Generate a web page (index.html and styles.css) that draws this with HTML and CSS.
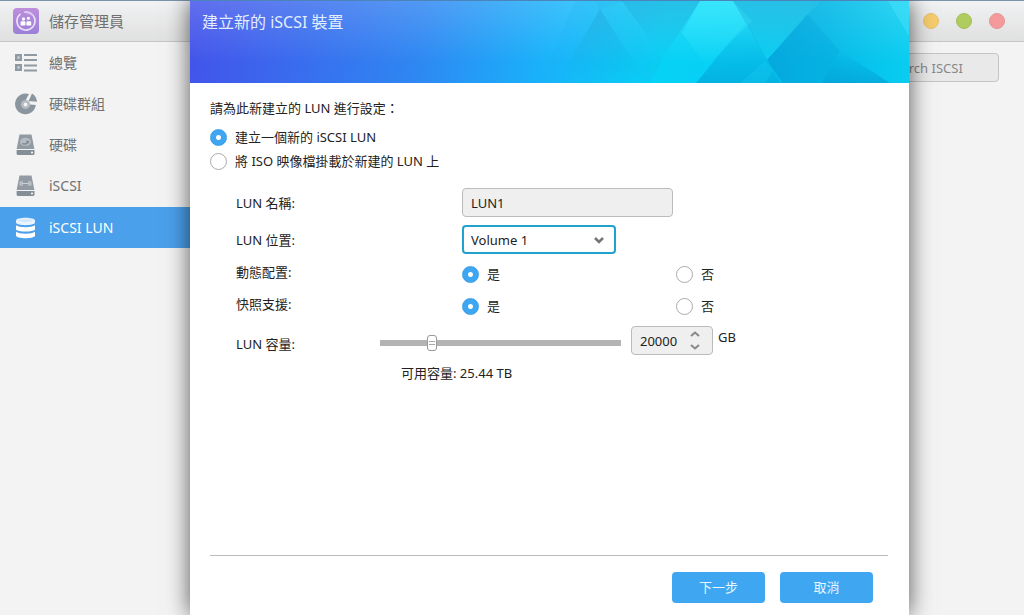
FILE: index.html
```
<!DOCTYPE html>
<html lang="zh-Hant">
<head>
    <meta charset="UTF-8">
    <meta name="viewport" content="width=device-width, initial-scale=1.0">
    <title>儲存管理員</title>
    <link rel="stylesheet" href="styles.css">
</head>
<body>
    <div class="app">
        <header class="titlebar">
            <svg class="app-icon" viewBox="0 0 26 26">
                <defs>
                    <linearGradient id="appBg" x1="0" y1="0" x2="0" y2="1">
                        <stop offset="0" stop-color="#bd8fdc"/>
                        <stop offset="1" stop-color="#9a7fd8"/>
                    </linearGradient>
                </defs>
                <rect width="26" height="26" rx="4" fill="url(#appBg)"/>
                <path d="M7 6.300 A9 9 0 1 0 12 4.100" fill="none" stroke="#ecdff8" stroke-width="1.700" stroke-linecap="round"/>
                <path d="M12 4.100 A9 9 0 0 1 20 7.500" fill="none" stroke="#d9c4ee" stroke-width="1.400"/>
                <rect x="7.600" y="13.200" width="4.800" height="4.400" rx="1.200" fill="#fff"/>
                <rect x="13.400" y="13.200" width="4.800" height="4.400" rx="1.200" fill="#fff"/>
                <rect x="9" y="9.600" width="3" height="2.800" rx="1" fill="#fff"/>
                <circle cx="15.400" cy="10.200" r="1.500" fill="#fff"/>
            </svg>
            <h1>儲存管理員</h1>
            <div class="window-buttons">
                <button class="dot yellow" aria-label="最小化"></button>
                <button class="dot green" aria-label="最大化"></button>
                <button class="dot red" aria-label="關閉"></button>
            </div>
        </header>

        <div class="workspace">
            <nav class="sidebar">
                <a href="#overview">
                    <svg viewBox="0 0 24 24">
                        <g fill="#d5d9dc" stroke="#909aa3" stroke-width="2.400">
                            <rect x="2.200" y="4.200" width="4.600" height="4.600"/>
                            <rect x="2.200" y="14.200" width="4.600" height="4.600"/>
                        </g>
                        <path d="M10 4h13M10 9h13M10 14.500h13M10 19.500h13" stroke="#909aa3" stroke-width="2"/>
                    </svg>
                    總覽
                </a>
                <a href="#groups">
                    <svg viewBox="0 0 24 24">
                        <path d="M15 2.100 A10.400 10.400 0 1 0 21.800 13 L16 12.500 A4.400 4.400 0 0 1 12 7.600 Z" fill="#8b959e"/>
                        <circle cx="11.500" cy="12.500" r="4.600" fill="#b3bac0"/>
                        <circle cx="11.500" cy="12.500" r="1.900" fill="#f3f3f3"/>
                        <path d="M18 1.600 A10.400 10.400 0 0 1 23 9.800 L14.600 9 Z" fill="#8b959e"/>
                    </svg>
                    硬碟群組
                </a>
                <a href="#disks">
                    <svg viewBox="0 0 24 24">
                        <path d="M5.500 1.500h12l2.900 14.500H2.600z" fill="#929ba4"/>
                        <path d="M2.600 17h17.900v3.500q0 1.500-1.500 1.500H4.100q-1.500 0-1.500-1.500z" fill="#848e97"/>
                        <ellipse cx="11.500" cy="8.800" rx="5.600" ry="4" fill="#b4bbc1"/>
                        <path d="M8.500 10.300q3 1.800 6-1.300l-2-1" fill="none" stroke="#7f8992" stroke-width="1.500"/>
                        <circle cx="18" cy="19.600" r="1" fill="#fff"/>
                    </svg>
                    硬碟
                </a>
                <a href="#iscsi">
                    <svg viewBox="0 0 24 24">
                        <path d="M5.500 1.500h12l2.900 14.500H2.600z" fill="#929ba4"/>
                        <path d="M2.600 17h17.900v3.500q0 1.500-1.500 1.500H4.100q-1.500 0-1.500-1.500z" fill="#848e97"/>
                        <path d="M6.200 7.500v4M8 7v5M8 9.500h7M15 7v5M16.800 7.500v4" fill="none" stroke="#c9ced2" stroke-width="1.200"/>
                        <circle cx="18" cy="19.600" r="1" fill="#fff"/>
                    </svg>
                    iSCSI
                </a>
                <a href="#lun" class="active">
                    <svg viewBox="0 0 24 24">
                        <path d="M2 4.500C2 .8 21 .8 21 4.500v2C21 10 2 10 2 6.500z" fill="#e9f4fe"/>
                        <path d="M2 9.200c3 2.600 16 2.600 19 0v4.300c-2 2.800-17 2.800-19 0z" fill="#fff"/>
                        <path d="M2 15.800c3 2.600 16 2.600 19 0v4.200c-2 3-17 3-19 0z" fill="#fff"/>
                        <ellipse cx="11.500" cy="4.500" rx="7.500" ry="1.500" fill="#d3e8fb"/>
                    </svg>
                    iSCSI LUN
                </a>
            </nav>
            <main class="content">
                <input class="search" type="search" placeholder="Search ISCSI" aria-label="Search ISCSI">
            </main>
        </div>
    </div>

    <section class="wizard" role="dialog" aria-labelledby="wizardTitle">
        <div class="wizard-header">
            <svg class="wizard-art" viewBox="0 0 719 82" preserveAspectRatio="none">
                <defs>
                    <linearGradient id="deep" x1="0" y1="0" x2="1" y2="0">
                        <stop offset="0" stop-color="#0496d4" stop-opacity=".6"/>
                        <stop offset=".45" stop-color="#0496d4" stop-opacity=".35"/>
                        <stop offset="1" stop-color="#0496d4" stop-opacity="0"/>
                    </linearGradient>
                    <linearGradient id="fall" x1="0" y1="0" x2="0" y2="1">
                        <stop offset="0" stop-color="#1a9bd0" stop-opacity=".4"/>
                        <stop offset="1" stop-color="#1a9bd0" stop-opacity=".05"/>
                    </linearGradient>
                    <linearGradient id="rise" x1="0" y1="0" x2="0" y2="1">
                        <stop offset="0" stop-color="#0294d0" stop-opacity="0"/>
                        <stop offset="1" stop-color="#0294d0" stop-opacity=".5"/>
                    </linearGradient>
                    <linearGradient id="glow" x1="0" y1="0" x2="0" y2="1">
                        <stop offset="0" stop-color="#3deeff" stop-opacity=".6"/>
                        <stop offset="1" stop-color="#3deeff" stop-opacity="0"/>
                    </linearGradient>
                </defs>
                <polygon points="385,0 436,0 410,8 367,82 350,82" fill="#1fa8f0" opacity=".15"/>
                <polygon points="410,8 367,82 457,82" fill="url(#fall)"/>
                <polygon points="432,0 473,57 510,0" fill="url(#fall)"/>
                <polygon points="410,8 405,0 432,0 473,57 460,82 457,82" fill="#20b4e4" opacity=".2"/>
                <polygon points="510,0 543,0 562,20 516,65 492,32" fill="url(#glow)"/>
                <polygon points="543,0 630,0 577,59" fill="url(#fall)"/>
                <polygon points="557,20 506,82 591,82 577,59" fill="url(#rise)"/>
                <polygon points="575,60 583,70 575,82 550,82" fill="#14c8f0" opacity=".4"/>
                <polygon points="630,0 577,59 592,82 719,82 719,0" fill="url(#deep)"/>
                <polygon points="617,13 577,59 592,82 632,82 650,50" fill="#0294d0" opacity=".2"/>
                <polygon points="650,50 632,82 700,82" fill="url(#rise)"/>
                <polygon points="698,0 719,0 719,35" fill="#54e8ff" opacity=".35"/>
            </svg>
            <h2 id="wizardTitle">建立新的 iSCSI 裝置</h2>
        </div>

        <form class="wizard-body">
            <p class="intro">請為此新建立的 LUN 進行設定：</p>
            <label class="choice"><input type="radio" name="mode" checked> 建立一個新的 iSCSI LUN</label>
            <label class="choice"><input type="radio" name="mode"> 將 ISO 映像檔掛載於新建的 LUN 上</label>

            <div class="fields">
                <label for="lunName">LUN 名稱:</label>
                <input class="text" type="text" id="lunName" value="LUN1">

                <label for="lunVolume">LUN 位置:</label>
                <div class="select-box">
                    <select id="lunVolume">
                        <option>Volume 1</option>
                    </select>
                    <svg viewBox="0 0 12 8"><path d="M2 2l4 4 4-4" fill="none" stroke="#777" stroke-width="2.600"/></svg>
                </div>

                <span class="pair-label" id="thinLabel">動態配置:</span>
                <div class="pair" role="radiogroup" aria-labelledby="thinLabel">
                    <label class="choice"><input type="radio" name="thin" checked> 是</label>
                    <label class="choice"><input type="radio" name="thin"> 否</label>
                </div>

                <span class="pair-label" id="snapLabel">快照支援:</span>
                <div class="pair" role="radiogroup" aria-labelledby="snapLabel">
                    <label class="choice"><input type="radio" name="snapshot" checked> 是</label>
                    <label class="choice"><input type="radio" name="snapshot"> 否</label>
                </div>
            </div>

            <div class="capacity">
                <label for="lunSize">LUN 容量:</label>
                <input class="slider" type="range" id="lunSize" min="0" max="98300" value="20000">
                <div class="spinner">
                    <input type="text" inputmode="numeric" value="20000" aria-label="LUN 容量 (GB)">
                    <div class="steps">
                        <button type="button" aria-label="增加"><svg viewBox="0 0 10 6"><path d="M1 5l4-3.500 4 3.500" fill="none" stroke="#888" stroke-width="2"/></svg></button>
                        <button type="button" aria-label="減少"><svg viewBox="0 0 10 6"><path d="M1 1l4 3.500 4-3.500" fill="none" stroke="#888" stroke-width="2"/></svg></button>
                    </div>
                </div>
                <span class="unit">GB</span>
            </div>
            <p class="available">可用容量: 25.44 TB</p>

            <div class="actions">
                <button type="button">下一步</button>
                <button type="button">取消</button>
            </div>
        </form>
    </section>
</body>
</html>
```

FILE: styles.css
```
* {
    box-sizing: border-box;
}
body {
    margin: 0;
    min-height: 100vh;
    position: relative;
    overflow: hidden;
    display: flex;
    background-color: #f3f3f3;
    font-family: "Noto Sans", "Noto Sans CJK TC", sans-serif;
    font-size: 13px;
    line-height: 20px;
    color: #222;
}
button, input, select {
    font: inherit;
    color: inherit;
}
h1, h2, p {
    margin: 0;
    font-weight: normal;
}

/* main window */
.app {
    flex: 1;
    display: flex;
    flex-direction: column;
    border-top: 1px solid #7c93ad;
}
.titlebar {
    display: flex;
    align-items: center;
    height: 41px;
    padding: 0 19px 0 13px;
    background: linear-gradient(#f0f2f3, #e0e0e0);
    border-bottom: 1px solid #c6c6c6;
}
.app-icon {
    width: 26px;
    height: 26px;
    margin-right: 10px;
}
.titlebar h1 {
    font-size: 15px;
    color: #707070;
}
.window-buttons {
    display: flex;
    gap: 17px;
    margin-left: auto;
}
.dot {
    width: 16px;
    height: 16px;
    padding: 0;
    border: 1px solid #e5c06a;
    border-radius: 50%;
}
.yellow {
    background-color: #f5cb6c;
}
.green {
    background-color: #b0cc5f;
    border-color: #a5c058;
}
.red {
    background-color: #f49a9a;
    border-color: #e59393;
}
.workspace {
    flex: 1;
    display: flex;
}
.sidebar {
    width: 190px;
}
.sidebar a {
    display: flex;
    align-items: center;
    height: 41px;
    padding-left: 14px;
    font-size: 14px;
    color: #707070;
    text-decoration: none;
}
.sidebar svg {
    width: 24px;
    height: 24px;
    margin-right: 11px;
}
.sidebar .active {
    margin-top: 1px;
    background-color: #4aa0eb;
    color: #fff;
}
.content {
    flex: 1;
    padding: 11px 25px;
    text-align: right;
}
.search {
    width: 130px;
    height: 29px;
    padding: 0 17px;
    border: 1px solid #c4c4c4;
    border-radius: 4px;
    background-color: #e9e9e9;
}
.search::placeholder {
    color: #888;
}

/* wizard dialog */
.wizard {
    position: absolute;
    top: 0;
    bottom: 0;
    left: 190px;
    right: 115px;
    display: flex;
    flex-direction: column;
    background-color: #fff;
    box-shadow: 0 0 22px rgba(0, 0, 0, 0.65);
}
.wizard-header {
    position: relative;
    height: 83px;
    padding: 11px 12px;
    border-top: 1px solid #4a84b8;
    background:
        linear-gradient(rgba(255, 255, 255, 0.16), rgba(255, 255, 255, 0) 75%),
        linear-gradient(100deg, #4352ea, #2f86f2 32%, #16b8fb 52%, #06d2f6 65%, #08cdf0);
}
.wizard-art {
    position: absolute;
    top: 0;
    left: 0;
    width: 100%;
    height: 100%;
}
.wizard-header h2 {
    position: relative;
    font-size: 16px;
    color: #e2eefe;
}
.wizard-body {
    flex: 1;
    display: flex;
    flex-direction: column;
    padding: 15px 21px 12px 20px;
}
.intro {
    margin-bottom: 7px;
}
.choice {
    display: flex;
    align-items: center;
    gap: 8px;
    height: 24px;
}
.choice input {
    appearance: none;
    width: 17px;
    height: 17px;
    margin: 0;
    border: 1px solid #aaa;
    border-radius: 50%;
    background-color: #fff;
}
.choice input:checked {
    border-color: #3d9fe8;
    background: radial-gradient(#fff 2px, #3fa6f2 3px);
}
.fields {
    display: grid;
    grid-template-columns: 226px 1fr;
    grid-template-rows: 29px 29px 24px 24px;
    row-gap: 8px;
    align-items: center;
    margin: 15px 0 0 26px;
}
.text {
    width: 211px;
    height: 29px;
    padding: 0 8px;
    border: 1px solid #bbb;
    border-radius: 4px;
    background-color: #efefef;
}
.select-box {
    display: grid;
    align-items: center;
    width: 154px;
}
.select-box select {
    grid-area: 1 / 1;
    appearance: none;
    height: 29px;
    padding: 0 7px;
    border: 2px solid #1fa2cc;
    border-radius: 4px;
    background-color: #fff;
}
.select-box svg {
    grid-area: 1 / 1;
    justify-self: end;
    width: 12px;
    height: 8px;
    margin-right: 11px;
    pointer-events: none;
}
.pair-label {
    padding-bottom: 4px;
}
.pair {
    display: grid;
    grid-template-columns: 214px 1fr;
}
.capacity {
    display: flex;
    align-items: center;
    height: 29px;
    margin: 8px 0 0 26px;
}
.capacity label {
    width: 144px;
    padding-top: 6px;
}
.slider {
    appearance: none;
    width: 241px;
    height: 16px;
    margin: 4px 10px 0 0;
    background: linear-gradient(#b3b3b3, #b3b3b3) center / 100% 6px no-repeat;
}
.slider::-webkit-slider-thumb {
    appearance: none;
    width: 10px;
    height: 16px;
    border: 1px solid #999;
    border-radius: 3px;
    background:
        linear-gradient(#aaa 1px, transparent 1px 3px, #aaa 3px) center / 6px 4px no-repeat,
        #fff;
}
.spinner {
    display: flex;
    width: 82px;
    height: 29px;
    border: 1px solid #bbb;
    border-radius: 4px;
    background-color: #efefef;
}
.spinner input {
    width: 56px;
    padding: 0 0 0 8px;
    border: none;
    background: none;
}
.steps {
    display: flex;
    flex-direction: column;
    justify-content: space-around;
}
.steps button {
    display: flex;
    align-items: center;
    height: 12px;
    padding: 0 2px;
    border: none;
    background: none;
}
.steps svg {
    width: 10px;
    height: 6px;
}
.unit {
    margin: 0 0 8px 5px;
}
.available {
    margin: 8px 0 0 191px;
}
.actions {
    display: flex;
    justify-content: flex-end;
    gap: 15px;
    margin-top: auto;
    padding: 16px 15px 0 0;
    border-top: 1px solid #bbb;
}
.actions button {
    width: 93px;
    height: 31px;
    padding: 0 0 2px;
    border: none;
    border-radius: 4px;
    background-color: #3fa6f2;
    color: #e8f6ff;
}
```
